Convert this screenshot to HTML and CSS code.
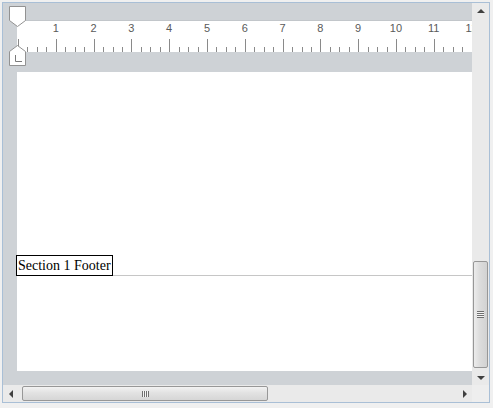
FILE: index.html
```html
<!DOCTYPE html>
<html lang="en">
<head>
  <meta charset="UTF-8" />
  <title>Section Footer</title>
  <link rel="stylesheet" href="styles.css">
</head>
<body>

<div class="editor">
  <div class="viewport">
    <div class="ruler">
      <div class="ruler-nums">
        <span>1</span><span>2</span><span>3</span><span>4</span><span>5</span><span>6</span>
        <span>7</span><span>8</span><span>9</span><span>10</span><span>11</span><span>12</span>
      </div>
    </div>

    <!-- indent markers sit over the ruler -->
    <svg class="marker marker-top" width="19" height="22" viewBox="0 0 19 22">
      <polygon points="1.5,0.5 17.5,0.5 17.5,14.5 9.5,20.5 1.5,14.5" />
    </svg>
    <svg class="marker marker-bottom" width="19" height="22" viewBox="0 0 19 22">
      <polygon points="9.5,0.5 17.5,6.5 17.5,20.5 1.5,20.5 1.5,6.5" />
      <path d="M7.5 10 V16.5 H14" class="tab-l" />
    </svg>

    <div class="page">
      <div class="footer-head">
        <span class="footer-label">Section 1 Footer</span>
        <span class="footer-line"></span>
      </div>
    </div>
  </div>

  <div class="vscroll">
    <div class="sb-btn"><span class="arrow arrow-up"></span></div>
    <div class="sb-track">
      <div class="thumb thumb-v"><span class="grip grip-v"></span></div>
    </div>
    <div class="sb-btn"><span class="arrow arrow-down"></span></div>
  </div>

  <div class="hscroll">
    <div class="sb-btn"><span class="arrow arrow-left"></span></div>
    <div class="sb-track">
      <div class="thumb thumb-h"><span class="grip grip-h"></span></div>
    </div>
    <div class="sb-btn"><span class="arrow arrow-right"></span></div>
  </div>

  <div class="corner"></div>
</div>

</body>
</html>
```

FILE: styles.css
```css
* {
  margin: 0;
  padding: 0;
  box-sizing: border-box;
}

body {
  margin: 2px;
  background: #f0f0f0;
  font-family: 'Liberation Sans', Arial, sans-serif;
}

.editor {
  width: 488px;
  height: 401px;
  border: 1px solid #a9bfd6;
  display: grid;
  grid-template-columns: 469px 17px;
  grid-template-rows: 382px 17px;
}

.viewport {
  position: relative;
  overflow: hidden;
  background: #ced2d6;
  padding: 17px 0 0 14px;
}

/* ruler */
.ruler {
  height: 32px;
  background-color: #fff;
  border-top: 1px solid #c2c6ca;
  background-image:
    repeating-linear-gradient(to right, #8a8a8a 0 1px, transparent 1px 37.8px),
    repeating-linear-gradient(to right, #8a8a8a 0 1px, transparent 1px 9.45px);
  background-size: 100% 13px, 100% 5px;
  background-position: 1px bottom, 1px bottom;
  background-repeat: no-repeat;
  overflow: hidden;
}

.ruler-nums {
  display: flex;
  padding: 1px 0 0 19.9px;
  font-size: 11px;
  line-height: 13px;
  color: #5a5a5a;
  white-space: nowrap;
}

.ruler-nums span {
  flex: 0 0 37.8px;
  text-align: center;
}

.marker {
  position: absolute;
  left: 5px;
}

.marker polygon {
  fill: #fff;
  stroke: #929292;
  stroke-width: 1;
}

.marker-top {
  top: 3px;
}

.marker-bottom {
  top: 42px;
}

.tab-l {
  fill: none;
  stroke: #7a7a7a;
  stroke-width: 1;
}

/* page */
.page {
  margin-top: 20px;
  height: 299px;
  background: #fff;
  padding-top: 183px;
}

.footer-head {
  display: flex;
  align-items: flex-end;
}

.footer-label {
  margin-left: -1px;
  height: 21px;
  padding: 0 1px 0 1px;
  border: 1px solid #000;
  font-family: 'Liberation Serif', 'Times New Roman', serif;
  font-size: 14px;
  line-height: 19px;
  color: #000;
  background: #fff;
}

.footer-line {
  flex: 1;
  border-bottom: 1px solid #c6c6c6;
}

/* scrollbars */
.vscroll,
.hscroll {
  display: flex;
  background: #eaeaea;
}

.vscroll {
  flex-direction: column;
}

.sb-btn {
  flex: 0 0 17px;
  display: flex;
  align-items: center;
  justify-content: center;
}

.sb-track {
  flex: 1;
  display: flex;
}

.vscroll .sb-track {
  flex-direction: column;
  padding: 241px 1px 0 1px;
}

.hscroll .sb-track {
  padding: 1px 0 1px 2px;
}

.thumb {
  border: 1px solid #979797;
  border-radius: 2px;
  display: flex;
  align-items: center;
  justify-content: center;
}

.thumb-v {
  height: 107px;
  background: linear-gradient(to right, #ececec, #dcdcdc 45%, #d2d2d2);
}

.thumb-h {
  width: 246px;
  background: linear-gradient(to bottom, #f2f2f2, #e2e2e2 45%, #d6d6d6);
}

.grip {
  display: block;
}

.grip-v {
  width: 7px;
  height: 7px;
  background: repeating-linear-gradient(to bottom, #6e6e6e 0 1px, #f4f4f4 1px 2px);
}

.grip-h {
  width: 7px;
  height: 6px;
  background: repeating-linear-gradient(to right, #6e6e6e 0 1px, #f4f4f4 1px 2px);
}

.arrow {
  width: 0;
  height: 0;
  border: 4px solid transparent;
}

.arrow-up {
  border-top: 0;
  border-bottom-color: #404040;
  margin-top: -2px;
}

.arrow-down {
  border-bottom: 0;
  border-top-color: #404040;
  margin-top: 2px;
}

.arrow-left {
  border-left: 0;
  border-right-color: #404040;
  margin-left: -2px;
}

.arrow-right {
  border-right: 0;
  border-left-color: #404040;
  margin-left: 2px;
}

.corner {
  background: #eeeeee;
}
```
